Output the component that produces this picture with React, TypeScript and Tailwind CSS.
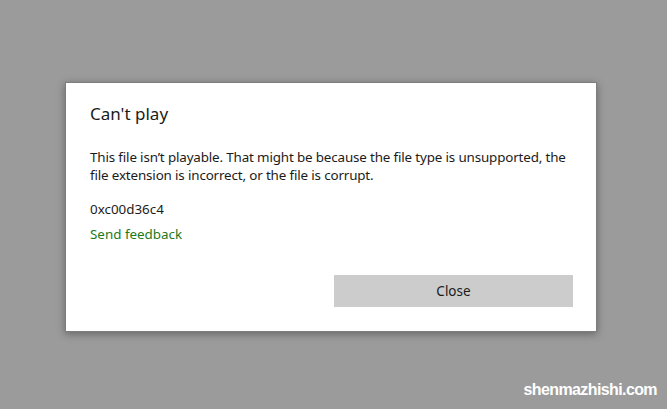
import React from "react";

export default function App() {
  return (
    <div className="relative h-[409px] w-[667px] overflow-hidden bg-[#9b9b9b] pl-[65px] pt-[82px] font-['Noto_Sans',sans-serif]">
      <div className="flex h-[250px] w-[532px] flex-col border border-[#7d7d7d] bg-white pl-[24px] pr-[14px] shadow-[0_2px_8px_rgba(0,0,0,0.35)]">
        <h1 className="mt-[19px] text-[17px] leading-[24px] text-[#1b1b1b]">Can't play</h1>
        <p className="mt-[22px] text-[13.4px] leading-[18px] tracking-[-0.15px] text-[#1b1b1b]">
          This file isn’t playable. That might be because the file type is unsupported, the file
          extension is incorrect, or the file is corrupt.
        </p>
        <p className="mt-[16px] text-[13.4px] leading-[18px] text-[#1b1b1b]">0xc00d36c4</p>
        <a className="mt-[7px] text-[13.4px] leading-[18px] text-[#1d7a1d]">Send feedback</a>
        <div className="mt-auto mb-[24px] mr-[9px] flex justify-end">
          <button className="h-[32px] w-[239px] bg-[#cccccc] text-[13.5px] text-[#1b1b1b]">
            Close
          </button>
        </div>
      </div>
      <div className="absolute bottom-[7px] right-[10px] font-['Liberation_Sans',sans-serif] text-[16px] font-bold tracking-[-0.6px] text-white">
        shenmazhishi.com
      </div>
    </div>
  );
}
